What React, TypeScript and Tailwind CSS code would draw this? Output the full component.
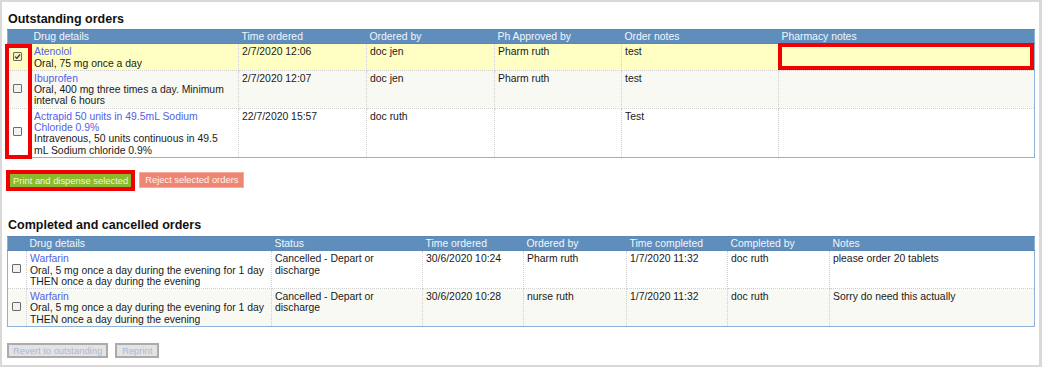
import React from "react";

type Cell = React.ReactNode;

const cellCls =
  "border border-dotted border-[#cfcfcf] align-top px-[3px] pt-[2px] pb-[1px] text-[#1a1a1a]";
const headCls =
  "bg-[#5f8ebd] text-[#f3f6fa] font-normal text-left px-[3px] pt-[1px] pb-[1px] border-y border-[#5a87b5] whitespace-nowrap overflow-hidden";

const Checkbox = ({ checked = false }: { checked?: boolean }) => (
  <span
    className={
      "inline-flex w-[9px] h-[9px] items-center justify-center rounded-[1px] border border-[#6b6b6b] " +
      (checked ? "bg-[#f6f2b0]" : "bg-[#f2f2f2]")
    }
  >
    {checked && (
      <svg width="7" height="7" viewBox="0 0 7 7">
        <path d="M1 3.6 L2.8 5.3 L6 1.5" fill="none" stroke="#333" strokeWidth="1.2" />
      </svg>
    )}
  </span>
);

const Drug = ({ name, lines }: { name: string[]; lines: string[] }) => (
  <div className="whitespace-nowrap">
    {name.map((n, i) => (
      <div key={"n" + i} className="text-[#5261e4]">
        {n}
      </div>
    ))}
    {lines.map((l, i) => (
      <div key={"l" + i}>{l}</div>
    ))}
  </div>
);

const OrderTable = ({
  widths,
  heads,
  rows,
  bgs,
  boxPad,
}: {
  widths: number[];
  heads: string[];
  rows: { checked?: boolean; cells: Cell[] }[];
  bgs: string[];
  boxPad: string;
}) => (
  <table className="table-fixed border-collapse border border-solid border-[#8fb3d6] w-[1027px]">
    <colgroup>
      {widths.map((w, i) => (
        <col key={i} style={{ width: w }} />
      ))}
    </colgroup>
    <thead>
      <tr>
        {heads.map((h, i) => (
          <th key={i} className={headCls}>
            {h}
          </th>
        ))}
      </tr>
    </thead>
    <tbody>
      {rows.map((r, i) => (
        <tr key={i} className={bgs[i]}>
          <td className={"border border-dotted border-[#cfcfcf] align-middle text-left " + boxPad}>
            <Checkbox checked={r.checked} />
          </td>
          {r.cells.map((c, j) => (
            <td key={j} className={cellCls}>
              {c}
            </td>
          ))}
        </tr>
      ))}
    </tbody>
  </table>
);

export default function App() {
  return (
    <div className="w-[1042px] h-[367px] bg-white border-2 border-r-[3px] border-[#d9d9d9] pl-[5px] pt-[10px] font-['Liberation_Sans',Arial,sans-serif] text-[10.4px] leading-[11.3px] overflow-hidden">
      <h2 className="text-[12.5px] leading-[14px] font-bold text-[#111] pl-[1px] mb-[3px]">
        Outstanding orders
      </h2>

      <div className="relative">
        <OrderTable
          widths={[23, 208, 128, 128, 127, 157, 256]}
          heads={["", "Drug details", "Time ordered", "Ordered by", "Ph Approved by", "Order notes", "Pharmacy notes"]}
          bgs={["bg-[#ffffc4]", "bg-[#f9f9f3]", "bg-white"]}
          boxPad="pl-[5px]"
          rows={[
            {
              checked: true,
              cells: [
                <Drug name={["Atenolol"]} lines={["Oral, 75 mg once a day"]} />,
                "2/7/2020 12:06",
                "doc jen",
                "Pharm ruth",
                "test",
                "",
              ],
            },
            {
              cells: [
                <Drug name={["Ibuprofen"]} lines={["Oral, 400 mg three times a day. Minimum", "interval 6 hours"]} />,
                "2/7/2020 12:07",
                "doc jen",
                "Pharm ruth",
                "test",
                "",
              ],
            },
            {
              cells: [
                <Drug
                  name={["Actrapid 50 units in 49.5mL Sodium", "Chloride 0.9%"]}
                  lines={["Intravenous, 50 units continuous in 49.5", "mL Sodium chloride 0.9%"]}
                />,
                "22/7/2020 15:57",
                "doc ruth",
                "",
                "Test",
                "",
              ],
            },
          ]}
        />
        {/* highlight annotations */}
        <div className="absolute left-[-2px] top-[15px] w-[27px] h-[115px] border-4 border-[#f00000]" />
        <div className="absolute left-[771px] top-[14px] w-[256px] h-[27px] border-4 border-[#f00000]" />
      </div>

      <div className="flex items-center gap-[4px] mt-[12px] ml-[-1px] text-[9.4px] leading-[11px]">
        <div className="border-4 border-[#f00000]">
          <button className="block bg-[#8aba2e] text-[#f0f7d8] px-[3px] h-[13px] leading-[13px] whitespace-nowrap">
            Print and dispense selected
          </button>
        </div>
        <button className="bg-[#ef8673] border border-[#f5ab9b] text-[#fff3ef] px-[5px] h-[16px] leading-[14px] whitespace-nowrap">
          Reject selected orders
        </button>
      </div>

      <h2 className="text-[12.5px] leading-[14px] font-bold text-[#111] pl-[1px] mt-[27px] mb-[4px]">
        Completed and cancelled orders
      </h2>

      <OrderTable
        widths={[19, 245, 151, 101, 103, 101, 102, 205]}
        heads={["", "Drug details", "Status", "Time ordered", "Ordered by", "Time completed", "Completed by", "Notes"]}
        bgs={["bg-white", "bg-[#f9f9f3]"]}
        boxPad="pl-[4px]"
        rows={[
          {
            cells: [
              <Drug
                name={["Warfarin"]}
                lines={["Oral, 5 mg once a day during the evening for 1 day", "THEN once a day during the evening"]}
              />,
              <div className="whitespace-nowrap">
                Cancelled - Depart or
                <br />
                discharge
              </div>,
              "30/6/2020 10:24",
              "Pharm ruth",
              "1/7/2020 11:32",
              "doc ruth",
              "please order 20 tablets",
            ],
          },
          {
            cells: [
              <Drug
                name={["Warfarin"]}
                lines={["Oral, 5 mg once a day during the evening for 1 day", "THEN once a day during the evening"]}
              />,
              <div className="whitespace-nowrap">
                Cancelled - Depart or
                <br />
                discharge
              </div>,
              "30/6/2020 10:28",
              "nurse ruth",
              "1/7/2020 11:32",
              "doc ruth",
              "Sorry do need this actually",
            ],
          },
        ]}
      />

      <div className="flex items-center gap-[7px] mt-[16px] text-[9.4px]">
        <button className="bg-[#e3e3e3] border-2 border-[#ababab] text-[#a8b9d6] px-[4px] h-[15px] leading-[11px] whitespace-nowrap">
          Revert to outstanding
        </button>
        <button className="bg-[#e3e3e3] border-2 border-[#ababab] text-[#a8b9d6] px-[5px] h-[15px] leading-[11px] whitespace-nowrap">
          Reprint
        </button>
      </div>
    </div>
  );
}
